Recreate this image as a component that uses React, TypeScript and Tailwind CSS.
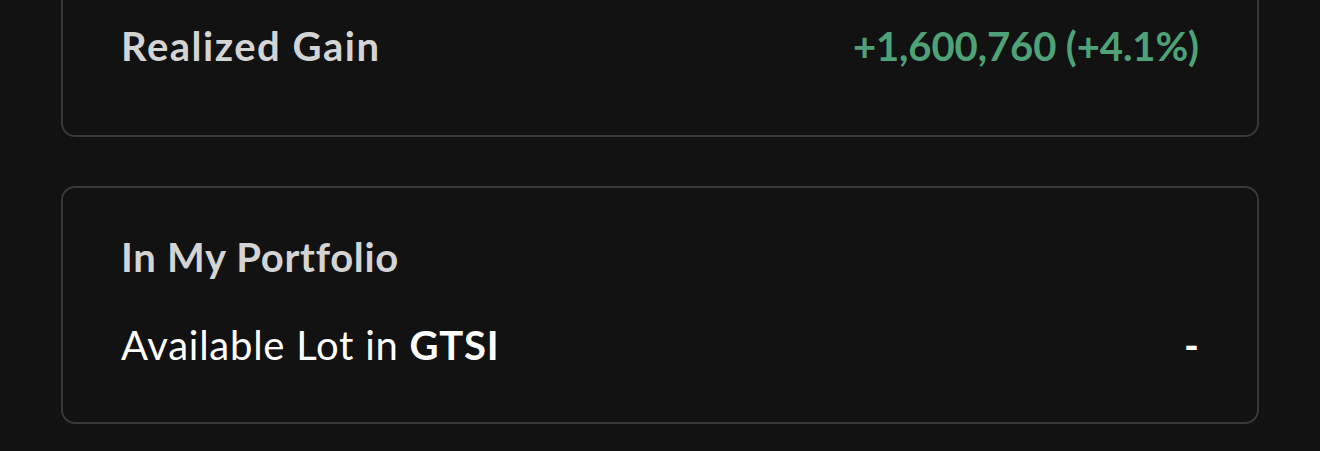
export default function App() {
  return (
    <div
      className="h-[451px] w-[1320px] overflow-hidden bg-[#121212] px-[61px]"
      style={{ fontFamily: 'Lato, "Open Sans", sans-serif' }}
    >
      <div className="-mt-[40px] flex flex-col gap-[49px]">
        {/* Realized gain card (top cut off) */}
        <div className="rounded-[14px] border-2 border-[#383838] px-[58px] pb-[65px] pt-[60px]">
          <div className="flex items-center justify-between text-[40px] font-bold leading-[48px]">
            <span className="tracking-[1.5px] text-[#d4d4d4]">Realized Gain</span>
            <span className="tracking-[-0.1px] text-[#4fa277]">+1,600,760 (+4.1%)</span>
          </div>
        </div>

        {/* Portfolio card */}
        <div className="rounded-[14px] border-2 border-[#383838] px-[58px] pb-[53px] pt-[45px]">
          <div className="text-[40px] font-bold leading-[48px] tracking-[0.7px] text-[#d4d4d4]">
            In My Portfolio
          </div>
          <div className="mt-[40px] flex items-center justify-between text-[40px] leading-[48px] text-white">
            <span className="tracking-[0.75px]">
              Available Lot in <span className="font-bold">GTSI</span>
            </span>
            <span className="font-bold">-</span>
          </div>
        </div>
      </div>
    </div>
  )
}
